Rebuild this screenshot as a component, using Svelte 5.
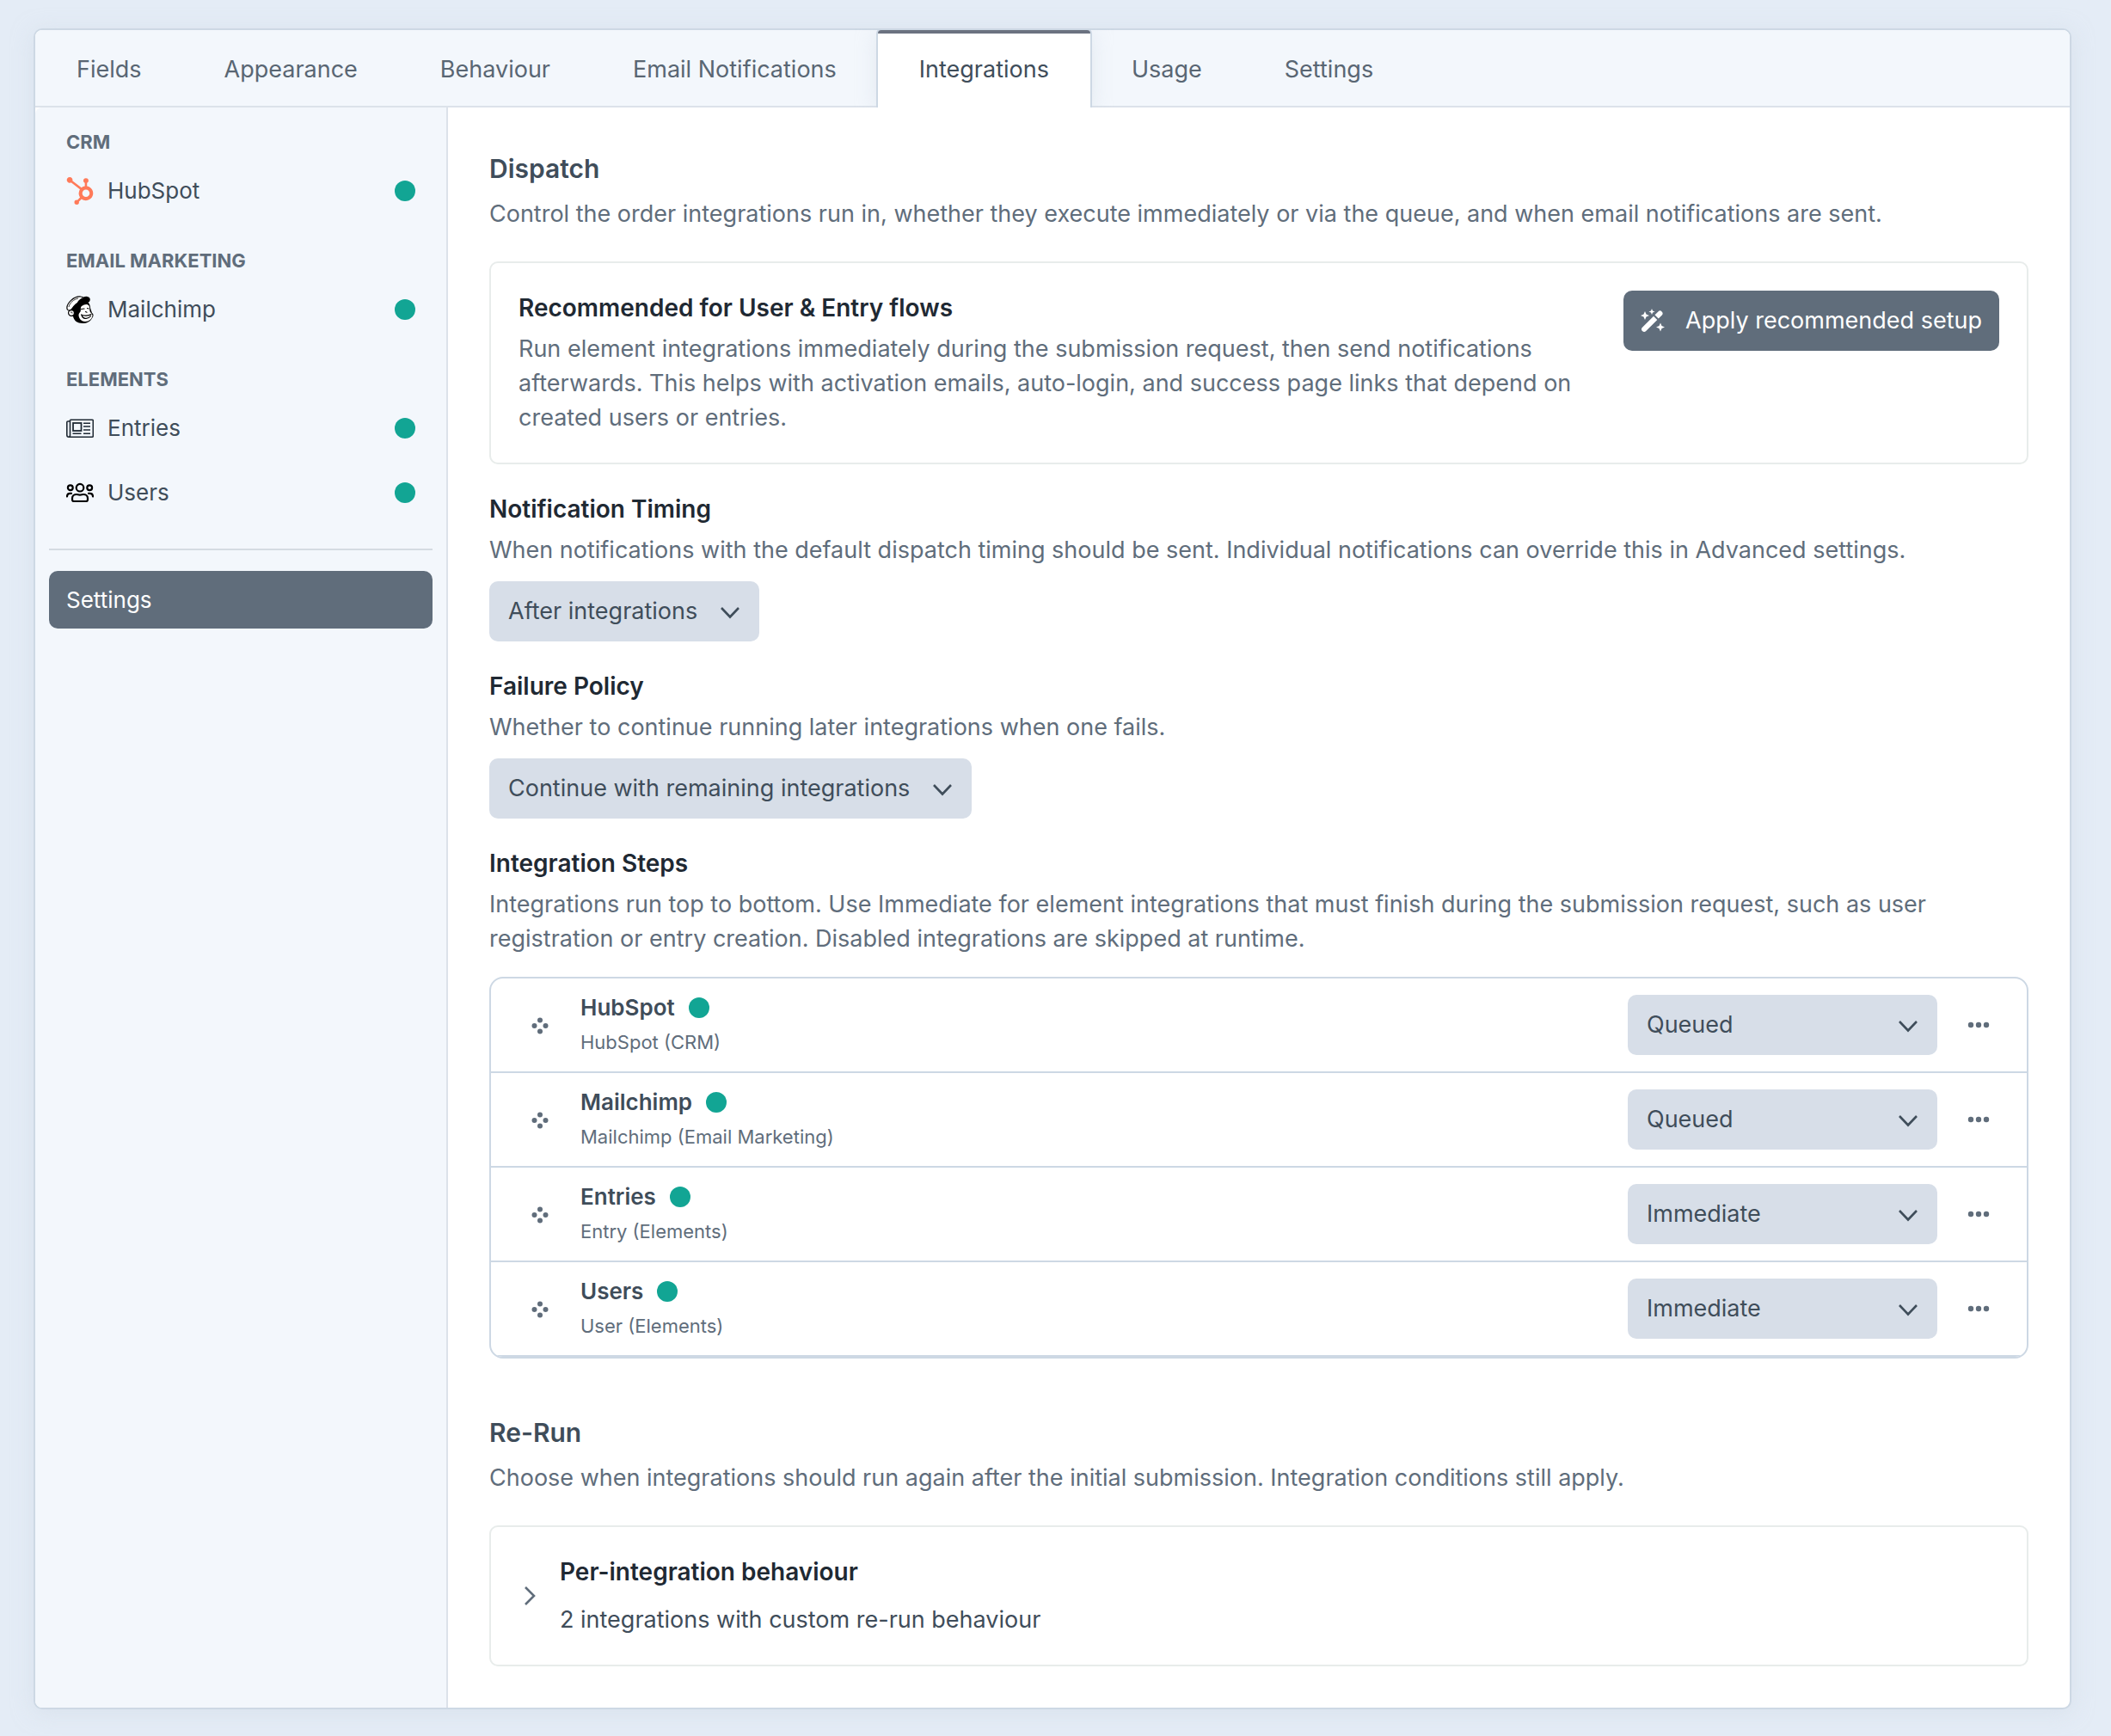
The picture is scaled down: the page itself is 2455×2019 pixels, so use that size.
<script lang="ts">
  type Integration = {
    name: string;
    type: string;
    timing: string;
  };

  const tabs = ['Fields', 'Appearance', 'Behaviour', 'Email Notifications', 'Integrations', 'Usage', 'Settings'];

  const groups = [
    { heading: 'CRM', items: ['HubSpot'] },
    { heading: 'Email Marketing', items: ['Mailchimp'] },
    { heading: 'Elements', items: ['Entries', 'Users'] }
  ];

  let activeTab = 'Integrations';
  let notificationTiming = 'after';
  let failurePolicy = 'continue';
  let expanded = false;

  let steps: Integration[] = [
    { name: 'HubSpot', type: 'HubSpot (CRM)', timing: 'queued' },
    { name: 'Mailchimp', type: 'Mailchimp (Email Marketing)', timing: 'queued' },
    { name: 'Entries', type: 'Entry (Elements)', timing: 'immediate' },
    { name: 'Users', type: 'User (Elements)', timing: 'immediate' }
  ];

  function applyRecommended() {
    notificationTiming = 'after';
    steps = steps.map((step) => ({
      ...step,
      timing: step.type.includes('Elements') ? 'immediate' : 'queued'
    }));
  }
</script>

<div class="page">
  <div class="pane">
    <nav class="tabs">
      {#each tabs as tab}
        <button type="button" class="tab" class:active={tab === activeTab} on:click={() => (activeTab = tab)}>{tab}</button>
      {/each}
    </nav>

    <div class="body">
      <aside class="sidebar">
        {#each groups as group}
          <section class="group">
            <h3>{group.heading}</h3>
            {#each group.items as item}
              <a class="nav-item" href="#{item.toLowerCase()}">
                {#if item === 'HubSpot'}
                  <svg class="nav-icon" viewBox="0 0 24 24" fill="#ff7a59" aria-hidden="true">
                    <path d="M18.164 7.93V5.084a2.198 2.198 0 001.267-1.978v-.067A2.2 2.2 0 0017.238.845h-.067a2.2 2.2 0 00-2.193 2.193v.067a2.196 2.196 0 001.252 1.973l.013.006v2.852a6.22 6.22 0 00-2.969 1.31l.012-.01-7.828-6.095A2.497 2.497 0 104.3 4.656l-.012.006 7.697 5.991a6.176 6.176 0 00-1.038 3.446c0 1.343.425 2.588 1.147 3.607l-.013-.02-2.342 2.343a1.968 1.968 0 00-.58-.095h-.002a2.033 2.033 0 102.033 2.033 1.978 1.978 0 00-.1-.595l.005.014 2.317-2.317a6.247 6.247 0 104.782-11.134l-.036-.005zm-.964 9.378a3.206 3.206 0 113.215-3.207v.002a3.206 3.206 0 01-3.207 3.207z" />
                  </svg>
                {:else if item === 'Mailchimp'}
                  <svg class="nav-icon" viewBox="0 0 32 32" aria-hidden="true">
                    <!-- hair -->
                    <path d="M7 13C9 7 15 4 20 5C25 6 28 9 28 14L30 20C32 21 32 24 30 26C28 30 24 32 19 32C13 32 9 29 8 24C4 24 3 20 5 17Z" fill="#000" />
                    <!-- face -->
                    <path d="M18 12C21 10 24 9 26 11C27.500 12.500 27 15 27.500 18C28 20 30.500 20.500 30.500 23C30 27 26.500 30 22 30C18 30 15 27 14.500 23C14.200 21 15.500 20 16.500 18.500C17.500 16.500 16 14 18 12Z" fill="#fff" />
                    <!-- cap -->
                    <path d="M1 15C0 9 9 0 17 1C19 1.200 19 2 20 2C23 1 27 1 27 4C27.500 6 26 7 25 7C19 6 13 7 9 12C7 15 6 17 4 17C2 17 1 16 1 15Z" fill="#fff" stroke="#000" stroke-width="1.200" />
                    <path d="M14 6C17 2 23 .8 26.500 2.500C28 4 27 6.500 25.500 7.500C22 6.500 17 6.500 12 9.500Z" fill="#000" />
                    <path d="M3 13C4 8 9 4 14 3" fill="none" stroke="#000" stroke-width=".8" />
                    <!-- ear -->
                    <circle cx="6" cy="20" r="3.400" fill="#fff" stroke="#000" stroke-width="1.200" />
                    <path d="M5 19.500C6 18.500 7 19 7 20.500" fill="none" stroke="#000" stroke-width=".9" />
                    <!-- eyes, nose and mouth -->
                    <path d="M17.500 15.500L21 15M24.500 14.500L26 15M22.500 18.500L24 19.200M17.500 22C20 23.500 26 23.500 29 21.500M18 22.500C19 27 25 28 28.500 23.500" fill="none" stroke="#000" stroke-width="1.200" stroke-linecap="round" />
                  </svg>
                {:else if item === 'Entries'}
                  <svg class="nav-icon" viewBox="0 0 32 32" fill="none" stroke="#1f2933" aria-hidden="true">
                    <path d="M4.500 6.200H30.300Q31.300 6.200 31.300 7.200V25Q31.300 26.200 30.300 26.200H3Q.8 26.200 .8 24V9Q.8 8 2 8H4.500M4.500 6.200V24Q4.500 26.200 3 26.200" stroke-width="1.600" />
                    <rect x="8" y="10" width="9.500" height="9" stroke-width="1.800" />
                    <path d="M20 10.300H28M20 14H28M20 18H28M20 22.300H28M7.500 22.300H17.500" stroke-width="1.600" />
                  </svg>
                {:else}
                  <svg class="nav-icon" viewBox="0 0 32 32" fill="none" stroke="#000" stroke-width="2.200" stroke-linecap="round" stroke-linejoin="round" aria-hidden="true">
                    <circle cx="16" cy="10.200" r="4.300" />
                    <circle cx="4.800" cy="10.200" r="2.900" />
                    <circle cx="27.200" cy="10.200" r="2.900" />
                    <path d="M9 26H23Q25 26 25 24V22.500C25 19.500 22.500 18 20 18C18.500 18 18 18.700 16 18.700C14 18.700 13.500 18 12 18C9.500 18 7 19.500 7 22.500V24Q7 26 9 26Z" />
                    <path d="M1 20.500C1 18 2.500 16.800 4.500 16.800H6M31 20.500C31 18 29.500 16.800 27.500 16.800H26" />
                  </svg>
                {/if}
                <span class="nav-label">{item}</span>
                <span class="status"></span>
              </a>
            {/each}
          </section>
        {/each}
        <hr />
        <a class="nav-item selected" href="#settings">Settings</a>
      </aside>

      <main class="content">
        <section>
          <h2>Dispatch</h2>
          <p class="intro">Control the order integrations run in, whether they execute immediately or via the queue, and when email notifications are sent.</p>

          <div class="card">
            <div class="card-text">
              <h4>Recommended for User &amp; Entry flows</h4>
              <p>Run element integrations immediately during the submission request, then send notifications afterwards. This helps with activation emails, auto-login, and success page links that depend on created users or entries.</p>
            </div>
            <button type="button" class="btn-primary" on:click={applyRecommended}>
              <svg class="wand" viewBox="0 0 28 28" fill="currentColor" aria-hidden="true">
                <g transform="rotate(-45 14 14)">
                  <path d="M0 11H18.500V17H0A3 3 0 0 1 0 11Z" />
                  <path d="M20.500 11H26A3 3 0 0 1 26 17H20.500Z" />
                </g>
                <path d="M5 3L6.500 6.500L10 8L6.500 9.500L5 13L3.500 9.500L0 8L3.500 6.500ZM13 0L14 2.500L16.500 3.500L14 4.500L13 7L12 4.500L9.500 3.500L12 2.500ZM23 16.500L24.500 20L28 21.500L24.500 23L23 26.500L21.500 23L18 21.500L21.500 20Z" />
              </svg>
              Apply recommended setup
            </button>
          </div>

          <div class="field">
            <label for="notification-timing">Notification Timing</label>
            <p>When notifications with the default dispatch timing should be sent. Individual notifications can override this in Advanced settings.</p>
            <div class="select">
              <select id="notification-timing" bind:value={notificationTiming}>
                <option value="after">After integrations</option>
                <option value="before">Before integrations</option>
              </select>
              <svg class="chevron" viewBox="0 0 22 22" aria-hidden="true"><path d="M1 6L11 16.500L21 6" /></svg>
            </div>
          </div>

          <div class="field">
            <label for="failure-policy">Failure Policy</label>
            <p>Whether to continue running later integrations when one fails.</p>
            <div class="select">
              <select id="failure-policy" bind:value={failurePolicy}>
                <option value="continue">Continue with remaining integrations</option>
                <option value="stop">Stop</option>
              </select>
              <svg class="chevron" viewBox="0 0 22 22" aria-hidden="true"><path d="M1 6L11 16.500L21 6" /></svg>
            </div>
          </div>

          <div class="field">
            <h4>Integration Steps</h4>
            <p>Integrations run top to bottom. Use Immediate for element integrations that must finish during the submission request, such as user registration or entry creation. Disabled integrations are skipped at runtime.</p>
            <ul class="steps">
              {#each steps as step}
                <li class="step">
                  <button type="button" class="icon-btn" aria-label="Reorder {step.name}">
                    <svg class="move" viewBox="0 0 20 20" fill="currentColor" aria-hidden="true">
                      <circle cx="10" cy="3.500" r="3" />
                      <circle cx="3.500" cy="10" r="3" />
                      <circle cx="16.500" cy="10" r="3" />
                      <circle cx="10" cy="16.500" r="3" />
                    </svg>
                  </button>
                  <div class="step-text">
                    <div class="step-name">{step.name}<span class="status"></span></div>
                    <div class="step-type">{step.type}</div>
                  </div>
                  <div class="select wide">
                    <select aria-label="{step.name} timing" bind:value={step.timing}>
                      <option value="queued">Queued</option>
                      <option value="immediate">Immediate</option>
                    </select>
                    <svg class="chevron" viewBox="0 0 22 22" aria-hidden="true"><path d="M1 6L11 16.500L21 6" /></svg>
                  </div>
                  <button type="button" class="icon-btn" aria-label="{step.name} actions">
                    <svg class="more" viewBox="0 0 26 8" fill="currentColor" aria-hidden="true">
                      <circle cx="4" cy="4" r="3.200" />
                      <circle cx="13" cy="4" r="3.200" />
                      <circle cx="22" cy="4" r="3.200" />
                    </svg>
                  </button>
                </li>
              {/each}
            </ul>
          </div>
        </section>

        <section>
          <h2>Re-Run</h2>
          <p class="intro">Choose when integrations should run again after the initial submission. Integration conditions still apply.</p>

          <button type="button" class="card disclosure" aria-expanded={expanded} on:click={() => (expanded = !expanded)}>
            <svg class="caret" viewBox="0 0 24 24" aria-hidden="true"><path d="M8 2L18 12L8 22" /></svg>
            <span class="disclosure-text">
              <strong>Per-integration behaviour</strong>
              <span>2 integrations with custom re-run behaviour</span>
            </span>
          </button>
        </section>
      </main>
    </div>
  </div>
</div>

<style>
  :global(body) {
    background: #e4ecf6;
    color: #3f4d5a;
    font-family: Inter, Roboto, "Liberation Sans", sans-serif;
    font-size: 27px;
    line-height: 40px;
  }
  h2, h3, h4, p, ul {
    margin: 0;
    padding: 0;
  }
  button, select {
    font: inherit;
    color: inherit;
    border: none;
    margin: 0;
    cursor: pointer;
  }
  .page {
    padding: 33px 46px 31px 39px;
  }
  .pane {
    background: #fff;
    border: 2px solid #cdd8e4;
    border-radius: 10px;
    box-shadow: 0 4px 24px rgba(205, 216, 228, 0.5);
  }

  /* Tabs */
  .tabs {
    display: flex;
    height: 88px;
    background: #f3f7fc;
    border-bottom: 2px solid #dce2ea;
    border-radius: 8px 8px 0 0;
  }
  .tab {
    height: 88px;
    padding: 3px 48px 0;
    background: none;
    color: #596673;
  }
  .tab.active {
    height: 90px;
    padding-bottom: 6px;
    background: #fff;
    color: #3f4d5a;
    border-top: 4px solid #6b7280;
    border-radius: 4px 4px 0 0;
    box-shadow: 0 0 0 2px #cdd8e4, 0 4px 24px rgba(205, 216, 228, 0.5);
    clip-path: inset(-2px -28px 0 -28px);
  }

  /* Sidebar */
  .body {
    display: flex;
  }
  .sidebar {
    flex: none;
    box-sizing: border-box;
    width: 480px;
    padding: 24px 16px;
    background: #f3f7fc;
    border-right: 2px solid #dce2ea;
    border-radius: 8px 0 0 8px;
  }
  .group {
    margin-bottom: 32px;
  }
  .group h3 {
    margin-bottom: 6px;
    padding: 0 20px;
    color: #606d7b;
    font-size: 22px;
    font-weight: 700;
    line-height: 33px;
    text-transform: uppercase;
  }
  .nav-item {
    display: flex;
    align-items: center;
    gap: 16px;
    height: 67px;
    padding: 0 20px;
    border-radius: 10px;
    color: #3f4d5a;
    font-size: 26px;
    text-decoration: none;
  }
  .nav-item + .nav-item {
    margin-top: 8px;
  }
  .nav-item.selected {
    background: #606d7b;
    color: #fff;
  }
  .nav-icon {
    width: 32px;
    height: 32px;
  }
  .nav-label {
    flex: 1;
  }
  .status {
    flex: none;
    width: 24px;
    height: 24px;
    border-radius: 50%;
    background: #12a594;
  }
  hr {
    margin: 0 0 24px;
    border: none;
    border-top: 2px solid #d5dbe2;
  }

  /* Content */
  .content {
    flex: 1;
    min-width: 0;
    padding: 48px;
  }
  .content section + section {
    margin-top: 63px;
  }
  h2 {
    margin-bottom: 10px;
    font-size: 30px;
    font-weight: 600;
    line-height: 46px;
  }
  p {
    color: #606d7b;
  }
  .intro {
    margin-bottom: 35px;
  }
  h4, label, strong {
    display: block;
    color: #1f2933;
    font-size: 28px;
    font-weight: 600;
  }
  h4, label {
    margin-bottom: 8px;
  }
  .card {
    display: flex;
    align-items: flex-start;
    gap: 32px;
    padding: 32px;
    border: 2px solid #e8eceb;
    border-radius: 10px;
  }
  .card-text {
    flex: 1;
  }
  .btn-primary {
    display: flex;
    align-items: center;
    gap: 24px;
    height: 70px;
    padding: 0 20px;
    border-radius: 10px;
    background: #606d7b;
    color: #fff;
  }
  .wand {
    width: 28px;
    height: 28px;
  }
  .field {
    margin-top: 32px;
  }
  .select {
    position: relative;
    display: inline-block;
    vertical-align: top;
    margin-top: 16px;
  }
  select {
    appearance: none;
    display: block;
    field-sizing: content;
    height: 70px;
    padding: 0 72px 0 22px;
    border-radius: 10px;
    background: #d7dee8;
    color: #3f4d5a;
  }
  .select.wide {
    width: 360px;
    margin-top: 0;
  }
  .wide select {
    width: 100%;
  }
  .chevron {
    position: absolute;
    top: 25px;
    right: 23px;
    width: 22px;
    height: 22px;
    pointer-events: none;
  }
  .chevron path, .caret path {
    fill: none;
    stroke: #3f4d5a;
    stroke-width: 2.6;
  }

  /* Steps */
  .steps {
    margin-top: 24px;
    border: 2px solid #cdd8e4;
    border-radius: 16px;
    overflow: hidden;
    list-style: none;
  }
  .step {
    display: flex;
    align-items: center;
    height: 108px;
    padding: 0 32px;
    border-bottom: 2px solid #cdd8e4;
  }
  .icon-btn {
    display: flex;
    align-items: center;
    justify-content: center;
    width: 48px;
    height: 48px;
    padding: 0;
    background: none;
    color: #606d7b;
  }
  .move {
    width: 20px;
    height: 20px;
    padding: 2px 0 0 2px;
  }
  .more {
    width: 26px;
    height: 8px;
  }
  .step-text {
    flex: 1;
    padding-left: 24px;
  }
  .step-name {
    display: flex;
    align-items: center;
    gap: 16px;
    font-size: 26px;
    font-weight: 600;
  }
  .step-type {
    color: #606d7b;
    font-size: 22px;
  }
  .step .select {
    margin-right: 24px;
  }

  /* Re-run */
  .disclosure {
    box-sizing: border-box;
    width: 100%;
    align-items: center;
    gap: 24px;
    border: 2px solid #e8eceb;
    background: #fff;
    text-align: left;
  }
  .caret {
    width: 24px;
    height: 24px;
  }
  .caret path {
    stroke: #606d7b;
  }
  .disclosure-text {
    display: flex;
    flex-direction: column;
    gap: 16px;
  }
</style>
